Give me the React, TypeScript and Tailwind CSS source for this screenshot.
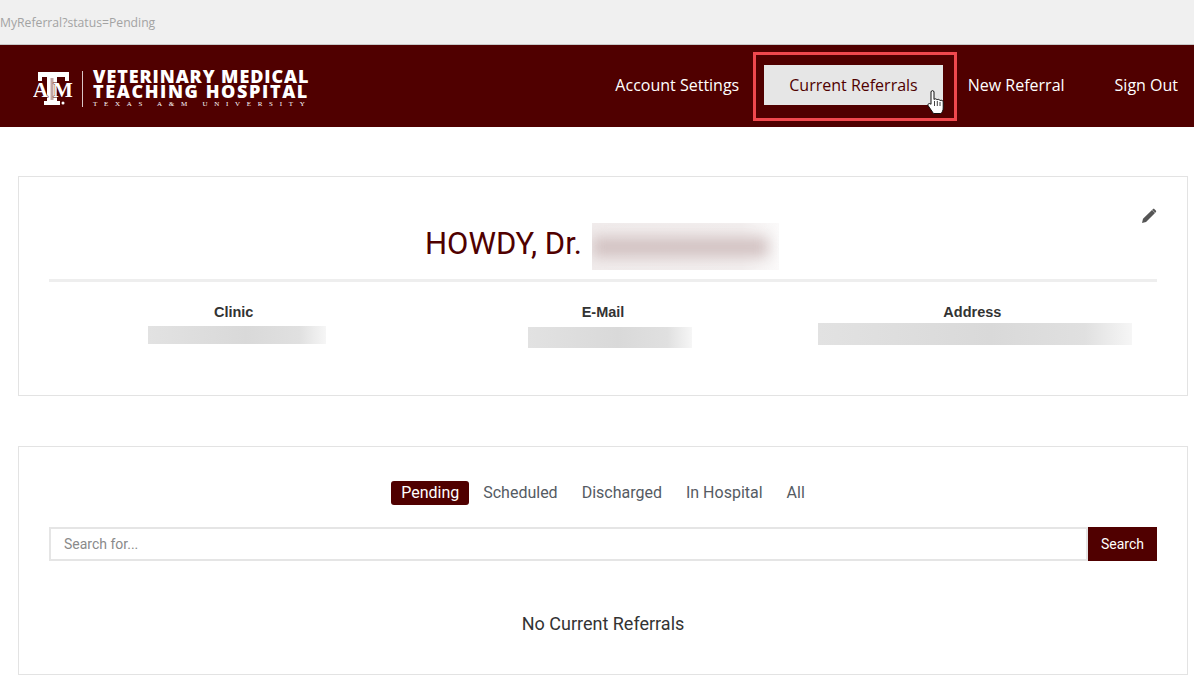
import React from 'react';

const tabs = ['Pending', 'Scheduled', 'Discharged', 'In Hospital', 'All'];

// blurred-out personal details, hard edges left and faded on the right
const Smudge: React.FC<{ className: string }> = ({ className }) => (
  <div className={`overflow-hidden bg-[linear-gradient(to_right,#e2e2e2_0%,#d9d9d9_55%,#e0e0e0_85%,#f6f6f6_100%)] ${className}`} />
);

const Logo: React.FC = () => (
  <div className="flex items-center text-white mt-[6px]">
    <svg width="43" height="36" viewBox="0 0 43 36" className="mr-[6px]">
      <path d="M5 1h31v9h-4V6H24v24h3v4H11v-4h3V6H9v4H5z" fill="#fff" />
      <path d="M17.500 7h3v22h-3z" fill="#500000" opacity="0.35" />
      <text x="0" y="26" fontFamily="'Liberation Serif', serif" fontWeight="700" fontSize="21" fill="#fff" stroke="#500000" strokeWidth="0.8" paintOrder="stroke">A</text>
      <text x="20" y="26" fontFamily="'Liberation Serif', serif" fontWeight="700" fontSize="21" fill="#fff" stroke="#500000" strokeWidth="0.8" paintOrder="stroke">M</text>
      <circle cx="30" cy="32" r="1.5" fill="#fff" />
    </svg>
    <div className="h-[36px] w-px bg-[#d9c6c6] mr-[10px]" />
    <div className="w-[216px] font-['Open_Sans',sans-serif] font-extrabold text-white">
      <div className="h-[15px] text-[18px] leading-[15px] tracking-[0.9px] whitespace-nowrap">VETERINARY MEDICAL</div>
      <div className="h-[15px] text-[18px] leading-[15px] tracking-[1.6px] whitespace-nowrap">TEACHING HOSPITAL</div>
      <div className="mt-[1px] font-['Liberation_Serif',serif] font-normal text-[7px] leading-[9px] tracking-[6.7px] whitespace-nowrap">TEXAS A&amp;M UNIVERSITY</div>
    </div>
  </div>
);

const HandCursor: React.FC = () => (
  <svg width="18" height="25" viewBox="0 0 18 25" className="absolute left-[927px] top-[90px]">
    <path
      d="M4 2c0-1.800 3-1.800 3 0v7.500c.8-1 2.700-.9 3 .4.8-.9 2.700-.7 3 .7.9-.7 3-.4 3.200 1.100v6.300c0 2.500-1 4.300-2.400 5.500H6.500L1.200 15.800c-1-1.600.9-3.300 2.800-1.500z"
      fill="#fff"
      stroke="#111"
      strokeWidth="1"
    />
    <path d="M7.500 11v5M10.300 11v5M13 12v4" stroke="#111" strokeWidth="0.8" />
  </svg>
);

export default function App() {
  return (
    <div className="relative min-h-[681px] bg-white font-['Roboto',sans-serif] overflow-hidden">
      <div className="h-[45px] bg-[#f0f0f0] border-b border-[#c8c8c8] flex items-center pt-[2px] font-['Open_Sans',sans-serif] text-[12.2px] text-[#a3a3a3]">
        MyReferral?status=Pending
      </div>

      <header className="h-[82px] bg-[#500000] flex items-center justify-between pl-[33px] pr-4">
        <Logo />
        <nav className="flex items-center mb-[2px] font-['Open_Sans',sans-serif] text-base text-white">
          <a className="px-[25px] leading-[40px]">Account Settings</a>
          <a className="px-[25px] leading-[40px] bg-[#e6e6e6] text-[#500000]">Current Referrals</a>
          <a className="px-[25px] leading-[40px]">New Referral</a>
          <a className="pl-[25px] leading-[40px]">Sign Out</a>
        </nav>
      </header>

      <main className="pl-[18px] pr-[6px] pt-[49px]">
        <section className="relative h-[220px] border border-[#e3e3e3] px-[30px] pt-[46px]">
          <svg width="16" height="16" viewBox="0 0 16 16" className="absolute right-[30px] top-[31px]">
            <path d="M1 15l1-4.200L11 2l3 3-9 9zM11.800 1.200c.5-.5 1.200-.5 1.700 0l1.300 1.300c.5.5.5 1.200 0 1.700l-.6.6-3-3z" fill="#555" />
          </svg>
          <div className="flex items-center justify-center gap-[10px] h-[47px] pr-[2px]">
            <h1 className="text-[31px] font-normal leading-[41px] h-[47px] text-[#500000]">HOWDY, Dr.</h1>
            <div className="w-[187px] h-[47px] flex items-center overflow-hidden bg-[linear-gradient(to_right,#f1ecec_0%,#f3efef_80%,#fbfafa_100%)]">
              <div className="w-[176px] h-[20px] blur-[7px] bg-[#d2c2c2]" />
            </div>
          </div>
          <div className="h-[3px] bg-[#eeeeee] mt-[9px]" />
          <div className="grid grid-cols-3 mt-[21px] text-center text-[#333333] font-['Liberation_Sans',sans-serif]">
            <div className="flex flex-col items-center">
              <div className="text-[14.5px] font-bold leading-[19px]">Clinic</div>
              <Smudge className="w-[178px] h-[18px] mt-[4px] ml-[6px]" />
            </div>
            <div className="flex flex-col items-center">
              <div className="text-[14.5px] font-bold leading-[19px]">E-Mail</div>
              <Smudge className="w-[164px] h-[21px] mt-[5px] ml-[15px]" />
            </div>
            <div className="flex flex-col items-center">
              <div className="text-[14.5px] font-bold leading-[19px]">Address</div>
              <Smudge className="w-[314px] h-[22px] mt-[1px] ml-[5px]" />
            </div>
          </div>
        </section>

        <section className="h-[229px] mt-[50px] border border-[#e3e3e3] px-[30px] pt-[34px]">
          <div className="flex justify-center gap-1 text-base text-[#555b63]">
            {tabs.map(tab => (
              <a
                key={tab}
                className={`px-[10px] h-6 leading-6 rounded-[3px] ${tab === 'Pending' ? 'bg-[#500000] text-white' : ''}`}
              >
                {tab}
              </a>
            ))}
          </div>
          <div className="flex mt-[22px] h-[34px]">
            <input
              placeholder="Search for..."
              className="flex-1 border-2 border-[#e5e5e5] px-[13px] text-sm text-[#777] placeholder:text-[#8a8a8a] outline-none"
            />
            <button className="w-[69px] bg-[#500000] text-white text-sm">Search</button>
          </div>
          <p className="mt-[51px] text-center text-lg leading-[24px] text-[#333333]">No Current Referrals</p>
        </section>
      </main>

      <div className="absolute left-[753px] top-[52px] w-[204px] h-[69px] border-[3px] border-[#f0484e]" />
      <HandCursor />
    </div>
  );
}
